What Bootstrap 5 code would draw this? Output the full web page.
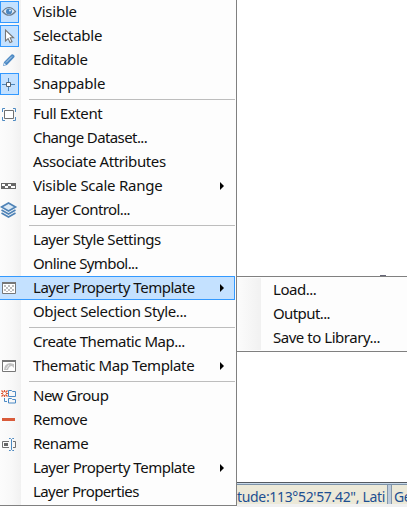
<!DOCTYPE html>
<html lang="en">
<head>
<meta charset="utf-8">
<title>Layer menu</title>
<link href="https://cdn.jsdelivr.net/npm/bootstrap@5.3.0/dist/css/bootstrap.min.css" rel="stylesheet">
<style>
body{height:507px;background:#fff;font-family:"Noto Sans","Liberation Sans",sans-serif;font-size:15px;line-height:24px;color:#111}
.layer-menu{width:237px;height:506px;background:linear-gradient(90deg,#fcfcfc,#f8f8f8 12px,#f1f1f1 21px,#fdfdfd 21px);border-right:1px solid #808080;border-bottom:1px solid #808080;z-index:2}
.menu-row{height:24px;width:235px;padding:0;border:1px solid transparent;border-left:0;line-height:20px;white-space:nowrap;color:#111;letter-spacing:-.25px}
.snug{letter-spacing:-.38px}
.tight{letter-spacing:-.47px}
.tighter{letter-spacing:-.6px}
.menu-row.current{background:#c4e1ff;border-color:#3399ff}
.glyph{width:19px;height:22px;flex:none;margin-right:14px}
.glyph svg{display:block;width:19px;height:22px}
.glyph.checked{background:#c4e1ff;box-shadow:0 0 0 1px #3399ff inset}
.rule{height:6px;margin-left:29px;width:206px;background:linear-gradient(#bdbdbd,#bdbdbd) 0 3px/100% 1px no-repeat}
.arrow{width:4px;height:8px;background:#000;clip-path:polygon(0 0,100% 50%,0 100%);margin:7px 10px 0 auto}
.flyout{left:236px;top:276px;width:171px;height:76px;border:1px solid #808080;border-right:0;padding-top:1px;background:linear-gradient(90deg,#fcfcfc,#f1f1f1) 0 1px/24px 72px no-repeat,#fdfdfd;z-index:3}
.flyout .menu-row{width:auto;padding-left:36px}
.statusbar{left:237px;right:0;top:482px;height:25px;background:#f0f0f0;z-index:1}
.status-fields{height:22px;border-top:1px solid #555a60;box-shadow:inset 0 1px #c7d8e8,inset 0 2px #7c92a8;background:#ece9d8;color:#1d4f91;font-size:14px;letter-spacing:-.33px;line-height:28px;white-space:nowrap}
.field-a{width:150px}
.divide{width:5px;height:19px;margin-top:2px;margin-right:2px;background:#bccbdc;border-left:1px solid #8396aa;border-right:1px solid #8396aa}
.speck{left:380px;top:275px;width:6px;height:1px;background:#667}
</style>
</head>
<body class="position-relative overflow-hidden">
<nav class="layer-menu position-relative">
<div class="menu-row d-flex"><span class="glyph checked"><svg viewBox="0 1 19 22"><path d="M2.500 11.500Q9 3.500 15.500 11.500Q9 19 2.500 11.500Z" fill="#dbe8f5" stroke="#6d7d8e" stroke-width="1.200"/><circle cx="9" cy="11.500" r="3" fill="#4a86c0"/><circle cx="10" cy="10.500" r="1" fill="#dcecff"/></svg></span><span>Visible</span></div>
<div class="menu-row d-flex"><span class="glyph checked"><svg viewBox="0 1 19 22"><path d="M5.500 6v11l2.600-2.400 1.900 4 2-.9-1.800-3.900h3.400Z" fill="#fff" stroke="#777" stroke-width="1.100"/></svg></span><span>Selectable</span></div>
<div class="menu-row d-flex"><span class="glyph"><svg viewBox="0 1 19 22"><path d="m3 18 1-4 7.500-7.500q1-.8 2 .2l.8.8q.8 1-.2 2L7 17Z" fill="#4e8ac4"/><path d="m6 14.500 6-6" stroke="#bdd7ee"/><path d="m3.500 17.500 1-2.500 1.500 1.500Z" fill="#e6f0fa"/></svg></span><span>Editable</span></div>
<div class="menu-row d-flex"><span class="glyph checked"><svg viewBox="0 1 19 22"><path d="M2 12.500h4m5 0h4M8.500 6v4m0 5v4" stroke="#4b86bd"/><path d="M6.500 10.500h4v4h-4z" fill="#fff" stroke="#59636d"/></svg></span><span>Snappable</span></div>
<div class="rule"></div>
<div class="menu-row d-flex snug"><span class="glyph"><svg viewBox="0 1 19 22"><path d="M4.500 8.500h9v8h-9z" fill="#fff" stroke="#707070"/><path d="M2.500 10V6.500H5m8 0h2.500V10m0 5v3.500H13m-8 0H2.500V15" fill="none" stroke="#4f8bc2"/></svg></span><span>Full Extent</span></div>
<div class="menu-row d-flex tighter"><span class="glyph"></span><span>Change Dataset...</span></div>
<div class="menu-row d-flex snug"><span class="glyph"></span><span>Associate Attributes</span></div>
<div class="menu-row d-flex"><span class="glyph"><svg viewBox="0 1 19 22"><path d="M1 9h15v6H1z" fill="#686868"/><path d="M2 10h3v2H2zm6 0h3v2H8zM5 12h3v2H5zm6 0h4v2h-4z" fill="#fff"/></svg></span><span>Visible Scale Range</span><i class="arrow"></i></div>
<div class="menu-row d-flex tighter"><span class="glyph"><svg viewBox="0 1 19 22"><path d="m1.500 9 7-4 7 4-7 4Z" fill="#dceaf6" stroke="#4f83b7" stroke-width="1.700"/><path d="m1.500 12 7 4 7-4m-14 3 7 4 7-4" fill="none" stroke="#4f83b7" stroke-width="1.700"/></svg></span><span>Layer Control...</span></div>
<div class="rule"></div>
<div class="menu-row d-flex tight"><span class="glyph"></span><span>Layer Style Settings</span></div>
<div class="menu-row d-flex tighter"><span class="glyph"></span><span>Online Symbol...</span></div>
<div class="menu-row current d-flex tight"><span class="glyph"><svg viewBox="0 1 19 22"><defs><pattern id="checks" x="4" y="9" width="4" height="4" patternUnits="userSpaceOnUse"><path d="M0 0h2v2H0zm2 2h2v2H2z" fill="#bdbdbd"/></pattern></defs><path d="M2.500 6.500h13v11h-13z" fill="#fff" stroke="#777"/><path d="M4 9h10v7H4z" fill="url(#checks)"/><path d="M2 7h14" stroke="#777" stroke-width="2"/></svg></span><span>Layer Property Template</span><i class="arrow"></i></div>
<div class="menu-row d-flex snug"><span class="glyph"></span><span>Object Selection Style...</span></div>
<div class="rule"></div>
<div class="menu-row d-flex tight"><span class="glyph"></span><span>Create Thematic Map...</span></div>
<div class="menu-row d-flex snug"><span class="glyph"><svg viewBox="0 1 19 22"><path d="M2.500 6.500h13v11h-13z" fill="#fff" stroke="#777"/><path d="M2 7h14" stroke="#777" stroke-width="2"/><path d="M4 16q0-6 6-7l4 1v4l-2-2q-3 0-4 4Z" fill="#c2c2c2"/><path d="m6 15 3-4" stroke="#eee"/></svg></span><span>Thematic Map Template</span><i class="arrow"></i></div>
<div class="rule"></div>
<div class="menu-row d-flex tight"><span class="glyph"><svg viewBox="0 1 19 22"><path d="M4.500 6v2m0 3v2M1 9.500h2m3 0h2M1.500 6.500 3.500 8.500m2 2 2 2m0-6-2 2m-2 2-2 2" stroke="#dd5a38" stroke-width="1.200"/><path d="M8.500 12.500v-6h3l1 1h3v5zm0 6.500v-4.500h3l1 1h3v3.500zM4.500 14v3.500H7" fill="none" stroke="#4b89c4"/></svg></span><span>New Group</span></div>
<div class="menu-row d-flex snug"><span class="glyph"><svg viewBox="0 1 19 22"><path d="M2 10h13v3H2z" fill="#d95b3a"/></svg></span><span>Remove</span></div>
<div class="menu-row d-flex tight"><span class="glyph"><svg viewBox="0 1 19 22"><path d="M9 9.500H2.500v6H9m4-6h2.500v6H13" fill="none" stroke="#707070"/><path d="M4 11h4v3H4z" fill="#666"/><path d="M9 6.500h1.500l1 1 1-1H14m-5 12h1.500l1-1 1 1H14m-2.500-11v10" fill="none" stroke="#4c89c0"/></svg></span><span>Rename</span></div>
<div class="menu-row d-flex tight"><span class="glyph"></span><span>Layer Property Template</span><i class="arrow"></i></div>
<div class="menu-row d-flex tighter"><span class="glyph"></span><span>Layer Properties</span></div>
</nav>
<div class="flyout position-absolute"><div class="menu-row tight">Load...</div><div class="menu-row tighter">Output...</div><div class="menu-row tight">Save to Library...</div></div>
<i class="speck position-absolute"></i>
<footer class="statusbar position-absolute"><div class="status-fields d-flex"><span class="field-a flex-shrink-0">tude:113°52'57.42", Lati</span><i class="divide flex-shrink-0"></i><span>Ge</span></div></footer>
<script src="https://cdn.jsdelivr.net/npm/bootstrap@5.3.0/dist/js/bootstrap.bundle.min.js"></script>
</body>
</html>
